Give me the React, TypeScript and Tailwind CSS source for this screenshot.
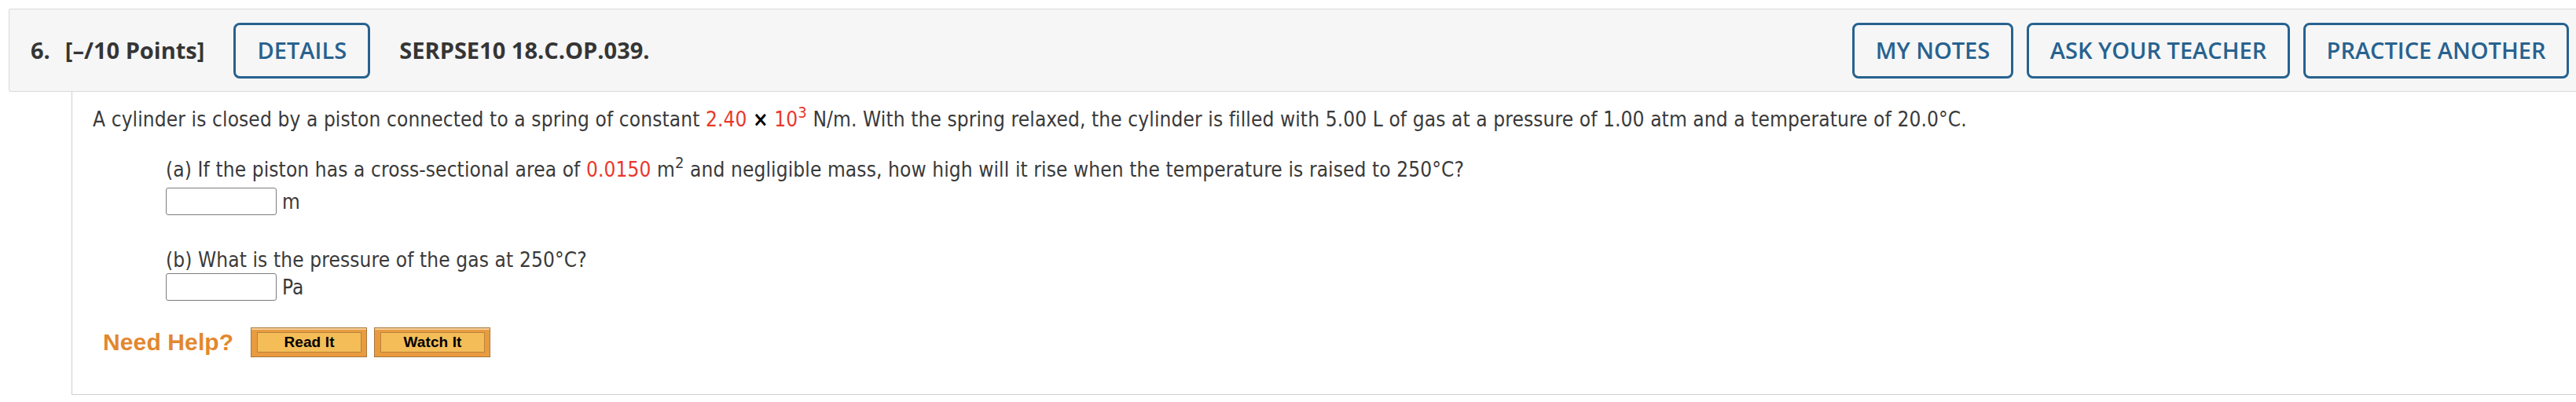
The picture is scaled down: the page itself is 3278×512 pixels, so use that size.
import React from "react";

const Red = ({ children }: { children: React.ReactNode }) => (
  <span className="text-[#e8382c]">{children}</span>
);

const OrangeButton = ({ label }: { label: string }) => (
  <div className="h-[38px] w-[148px] border border-[#a8763a] bg-[#e99b3f] p-[5px] pl-[7px] pr-[6px] shadow-[inset_0_2px_0_#f6cf98]">
    <div className="flex h-full items-center justify-center border border-[#b8843f] bg-[#f4bd58] font-['Liberation_Sans',Arial,sans-serif] text-[19px] font-bold text-black">
      {label}
    </div>
  </div>
);

const AnswerBox = ({ unit }: { unit: string }) => (
  <div className="ml-[119px] flex h-[35px] items-center">
    <div className="h-[35px] w-[141px] rounded-[3px] border-[1.5px] border-[#7c7c7c] bg-white" />
    <span className="ml-[7px]">{unit}</span>
  </div>
);

export default function App() {
  return (
    <div className="w-[3278px] bg-white">
      {/* question header */}
      <div className="ml-[11px] mt-[11px] flex h-[106px] items-center rounded-l-[3px] border-y border-l border-[#dadada] bg-[#f6f6f6] pl-[27px] pr-[9px] font-['Open_Sans',sans-serif] text-[#353535]">
        <span className="text-[29px] font-bold">6.</span>
        <span className="ml-[19px] text-[29px] font-bold">[–/10 Points]</span>
        <button className="ml-[37px] h-[71px] w-[174px] rounded-[8px] border-[3px] border-[#27628f] text-[29px] font-semibold text-[#27628f]">
          DETAILS
        </button>
        <span className="ml-[37px] text-[29px] font-bold">SERPSE10 18.C.OP.039.</span>
        <div className="ml-auto flex gap-[17px]">
          <button className="h-[71px] w-[205px] rounded-[8px] border-[3px] border-[#27628f] text-[29px] font-semibold text-[#27628f]">
            MY NOTES
          </button>
          <button className="h-[71px] w-[335px] rounded-[8px] border-[3px] border-[#27628f] text-[29px] font-semibold text-[#27628f]">
            ASK YOUR TEACHER
          </button>
          <button className="h-[71px] w-[338px] rounded-[8px] border-[3px] border-[#27628f] text-[29px] font-semibold text-[#27628f]">
            PRACTICE ANOTHER
          </button>
        </div>
      </div>

      {/* question body */}
      <div className="ml-[91px] border-b border-l border-[#cfcfcf] pb-[47px] pt-[19px] font-['DejaVu_Sans_Condensed','DejaVu_Sans',sans-serif] text-[26px] leading-[32px] tracking-[0.12px] text-[#3a3a3a]">
        <p className="ml-[26px] whitespace-nowrap">
          A cylinder is closed by a piston connected to a spring of constant <Red>2.40</Red>{" "}
          <span className="font-bold text-black">×</span>{" "}
          <Red>
            10<sup className="-top-[11px] text-[20px]">3</sup>
          </Red>{" "}
          N/m. With the spring relaxed, the cylinder is filled with 5.00 L of gas at a pressure of 1.00 atm and a
          temperature of 20.0°C.
        </p>

        <p className="ml-[119px] mt-[32px] whitespace-nowrap">
          (a) If the piston has a cross-sectional area of <Red>0.0150</Red> m
          <sup className="-top-[11px] text-[20px]">2</sup> and negligible mass, how high will it rise when the
          temperature is raised to 250°C?
        </p>
        <div className="mt-[7px]">
          <AnswerBox unit="m" />
        </div>

        <p className="ml-[119px] mt-[41px] whitespace-nowrap">(b) What is the pressure of the gas at 250°C?</p>
        <div className="mt-[1px]">
          <AnswerBox unit="Pa" />
        </div>

        <div className="ml-[39px] mt-[34px] flex items-center">
          <span className="w-[188px] font-['Liberation_Sans',Arial,sans-serif] text-[30px] font-bold text-[#e3872e]">
            Need Help?
          </span>
          <div className="flex gap-[9px]">
            <OrangeButton label="Read It" />
            <OrangeButton label="Watch It" />
          </div>
        </div>
      </div>
    </div>
  );
}
